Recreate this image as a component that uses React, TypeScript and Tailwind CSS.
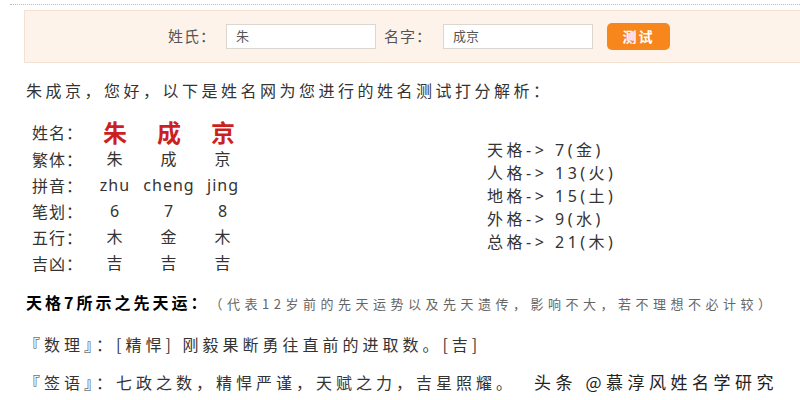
const rows = [
  { label: '繁体：', cells: ['朱', '成', '京'] },
  { label: '拼音：', cells: ['zhu', 'cheng', 'jing'] },
  { label: '笔划：', cells: ['6', '7', '8'] },
  { label: '五行：', cells: ['木', '金', '木'] },
  { label: '吉凶：', cells: ['吉', '吉', '吉'] },
]

const grids = [
  { name: '天格', value: '7(金)' },
  { name: '人格', value: '13(火)' },
  { name: '地格', value: '15(土)' },
  { name: '外格', value: '9(水)' },
  { name: '总格', value: '21(木)' },
]

export default function App() {
  return (
    <div className="w-[800px] h-[400px] overflow-hidden bg-white text-[#333] font-['Noto_Sans_CJK_SC','Noto_Sans',sans-serif]">
      {/* dotted rule */}
      <div className="pt-[4px] pl-[10px]">
        <div className="border-t border-dotted border-[#bdbdbd]" />
      </div>

      {/* search bar */}
      <div className="ml-[24px] mt-[5px] h-[53px] bg-[#fdf3ea] border border-r-0 border-[#f3e2d2] flex items-center pl-[143px]">
        <span className="text-[15px] tracking-[1px] text-[#555]">姓氏：</span>
        <div className="ml-[10px] w-[150px] h-[25px] bg-white border border-[#dcd6d0] flex items-center pl-[9px] text-[13px] text-[#555] font-['Liberation_Serif','Noto_Sans_CJK_SC',serif]">朱</div>
        <span className="ml-[8px] text-[15px] tracking-[1px] text-[#555]">名字：</span>
        <div className="ml-[11px] w-[150px] h-[25px] bg-white border border-[#dcd6d0] flex items-center pl-[9px] text-[13px] text-[#555] font-['Liberation_Serif','Noto_Sans_CJK_SC',serif]">成京</div>
        <div className="ml-[14px] w-[63px] h-[27px] rounded-[5px] bg-[#f7871c] flex items-center justify-center text-[14px] font-bold text-white tracking-[2px]">测试</div>
      </div>

      {/* intro */}
      <div className="mt-[16px] pl-[26px] text-[16px] leading-[22px] tracking-[3.5px]">
        朱成京，您好，以下是姓名网为您进行的姓名测试打分解析：
      </div>

      {/* table + five grids */}
      <div className="mt-[17px] flex">
        <div className="ml-[32px] w-[455px]">
          <div className="flex items-center h-[28px]">
            <span className="w-[56px] text-[16px] tracking-[1px]">姓名：</span>
            {['朱', '成', '京'].map((c) => (
              <span key={c} className="w-[54px] text-center text-[24px] font-bold text-[#cc1f1f]">{c}</span>
            ))}
          </div>
          {rows.map((r) => (
            <div key={r.label} className="flex items-center h-[26px]">
              <span className="w-[56px] text-[16px] tracking-[1px]">{r.label}</span>
              {r.cells.map((c, i) => (
                <span key={i} className="w-[54px] text-center text-[16px] tracking-[1px] font-['Noto_Sans','Noto_Sans_CJK_SC',sans-serif]">{c}</span>
              ))}
            </div>
          ))}
        </div>
        <div className="mt-[20px]">
          {grids.map((g) => (
            <div key={g.name} className="h-[23px] flex items-center text-[16px] tracking-[3.5px] font-['Noto_Sans','Noto_Sans_CJK_SC',sans-serif]">
              {g.name}-&gt; {g.value}
            </div>
          ))}
        </div>
      </div>

      {/* section heading */}
      <div className="mt-[14px] pl-[26px] flex items-baseline">
        <span className="text-[16px] font-bold text-black tracking-[3px]">天格7所示之先天运：</span>
        <span className="text-[13px] text-[#666] tracking-[4.5px]">（代表12岁前的先天运势以及先天遗传，影响不大，若不理想不必计较）</span>
      </div>

      <div className="mt-[18px] pl-[24px] text-[16px] tracking-[4px]">
        『数理』：[精悍] 刚毅果断勇往直前的进取数。[吉]
      </div>

      <div className="mt-[13px] pl-[24px] flex items-center">
        <span className="text-[16px] tracking-[4px]">『签语』：七政之数，精悍严谨，天赋之力，吉星照耀。</span>
        <span className="ml-auto mr-[22px] text-[17px] text-[#222] tracking-[4.5px]">头条 @慕淳风姓名学研究</span>
      </div>
    </div>
  )
}
